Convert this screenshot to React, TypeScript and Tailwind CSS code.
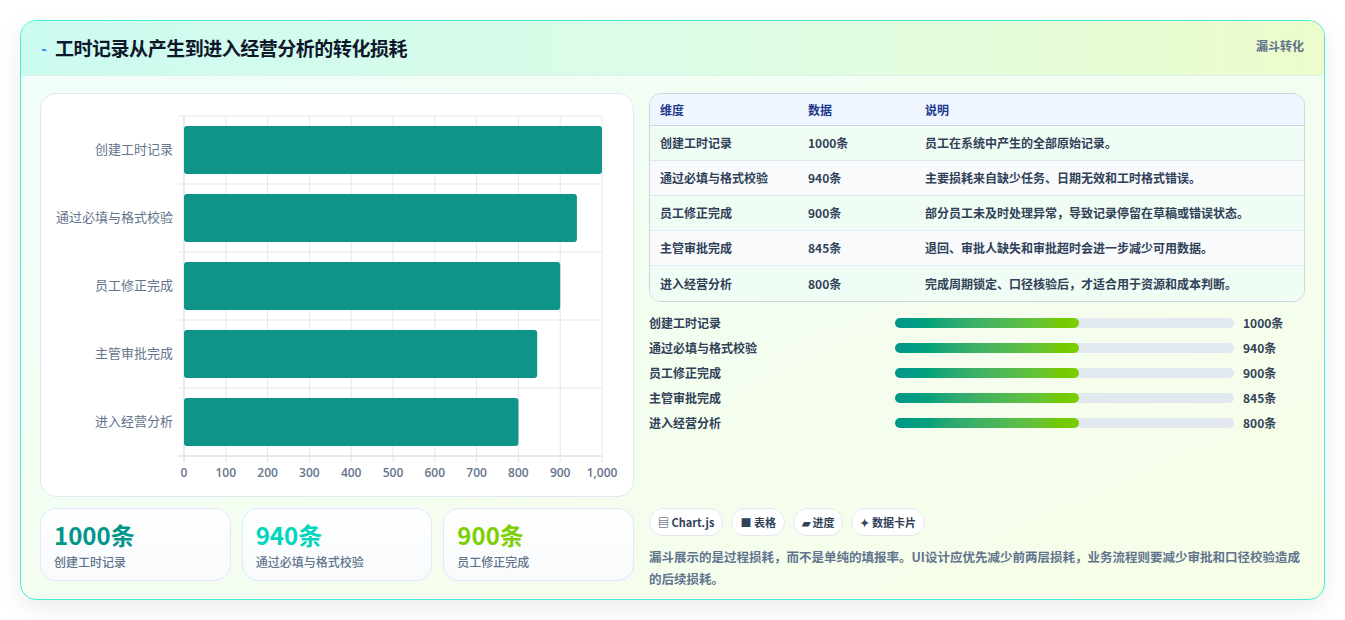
import React from "react";

const rows = [
  ["创建工时记录", 1000, "员工在系统中产生的全部原始记录。"],
  ["通过必填与格式校验", 940, "主要损耗来自缺少任务、日期无效和工时格式错误。"],
  ["员工修正完成", 900, "部分员工未及时处理异常，导致记录停留在草稿或错误状态。"],
  ["主管审批完成", 845, "退回、审批人缺失和审批超时会进一步减少可用数据。"],
  ["进入经营分析", 800, "完成周期锁定、口径核验后，才适合用于资源和成本判断。"],
] as const;

function Chart() {
  const x0 = 143, x1 = 561, top = 22, band = 68;
  const sx = (v: number) => x0 + ((x1 - x0) * v) / 1000;
  return (
    <svg width="593" height="403" className="block">
      {Array.from({ length: 11 }, (_, i) => (
        <g key={i}>
          <line x1={sx(i * 100)} x2={sx(i * 100)} y1={top} y2={top + band * 5 + 6} stroke={i === 0 ? "#d1d5db" : "#e5e7eb"} />
          <text x={sx(i * 100)} y={383} textAnchor="middle" fontSize="12" fontWeight="600" fill="#64748b" fontFamily="'Open Sans', sans-serif">
            {i === 10 ? "1,000" : i * 100}
          </text>
        </g>
      ))}
      {Array.from({ length: 6 }, (_, i) => (
        <line key={i} x1={x0 - 6} x2={x1} y1={top + band * i} y2={top + band * i} stroke={i === 5 ? "#d1d5db" : "#e5e7eb"} />
      ))}
      {rows.map(([n, v], i) => (
        <g key={n}>
          <rect x={x0} y={top + band * i + 10} width={sx(v) - x0} height={48} rx={3} fill="#0f9488" />
          <text x={132} y={top + band * i + 38} textAnchor="end" fontSize="13" fill="#64748b" fontFamily="'Noto Sans CJK SC', sans-serif">{n}</text>
        </g>
      ))}
    </svg>
  );
}

export default function App() {
  return (
    <div className="w-[1345px] h-[620px] bg-white pt-5 pl-5" style={{ fontFamily: "'Noto Sans CJK SC', 'Noto Sans', sans-serif" }}>
      <div className="w-[1305px] h-[580px] rounded-2xl border border-teal-300 overflow-hidden shadow-[0_8px_24px_rgba(0,0,0,0.08)] bg-gradient-to-br from-[#f0fdfa] to-[#f7fee7]">
        <div className="h-[55px] flex items-center justify-between px-5 bg-gradient-to-r from-[#ccfbf1] via-[#dcfce7] to-[#ecfccb] border-b border-[#d9f3ea]">
          <div className="flex items-center gap-2">
            <span className="text-blue-600 text-[10px]">⌁</span>
            <span className="text-[19px] font-bold text-slate-900 tracking-tight">工时记录从产生到进入经营分析的转化损耗</span>
          </div>
          <span className="text-[12px] font-bold text-slate-500 self-start mt-[16px]">漏斗转化</span>
        </div>
        <div className="flex gap-[15px] px-[19px] pt-[17px]">
          <div className="w-[594px] flex flex-col gap-[11px]">
            <div className="h-[404px] bg-white rounded-2xl border border-[#e2e8f0]">
              <Chart />
            </div>
            <div className="grid grid-cols-3 gap-[11px]">
              {[["1000条", "创建工时记录", "text-teal-600"], ["940条", "通过必填与格式校验", "text-teal-400"], ["900条", "员工修正完成", "text-lime-500"]].map(([v, l, c]) => (
                <div key={l} className="h-[73px] rounded-2xl border border-[#dbeafe] bg-gradient-to-b from-white to-[#f8fafc] px-[13px] pt-[10px]">
                  <div className={`text-[24px] font-bold leading-[32px] ${c}`}>{v}</div>
                  <div className="text-[12px] font-medium text-slate-500 mt-[2px]">{l}</div>
                </div>
              ))}
            </div>
          </div>
          <div className="w-[657px] flex flex-col">
            <div className="rounded-xl border border-[#cbd5e1] overflow-hidden text-[12px] font-semibold">
              <div className="flex items-center h-[32px] bg-[#eff6ff] text-blue-900 border-b border-[#cbd5e1]">
                <div className="w-[158px] pl-[10px]">维度</div><div className="w-[117px]">数据</div><div>说明</div>
              </div>
              {rows.map(([n, v, d], i) => (
                <div key={n} className={`flex items-center h-[35px] text-slate-700 ${i < 4 ? "border-b border-[#e2e8f0]" : ""} ${i % 2 ? "bg-[#f8fafc]" : "bg-[#f0fdf4]"}`}>
                  <div className="w-[158px] pl-[10px]">{n}</div><div className="w-[117px]">{v}条</div><div>{d}</div>
                </div>
              ))}
            </div>
            <div className="mt-[12px] flex flex-col gap-[7px]">
              {rows.map(([n, v]) => (
                <div key={n} className="flex items-center h-[18px] text-[12px] font-semibold text-slate-700">
                  <div className="w-[246px]">{n}</div>
                  <div className="w-[339px] h-[10px] rounded-full bg-[#e2e8f0]">
                    <div className="w-[184px] h-full rounded-full bg-gradient-to-r from-teal-600 to-lime-500" />
                  </div>
                  <div className="ml-[9px] font-bold">{v}条</div>
                </div>
              ))}
            </div>
            <div className="mt-[76px] flex gap-2">
              {["▤ Chart.js", "■ 表格", "▰ 进度", "✦ 数据卡片"].map((t) => (
                <span key={t} className="h-[28px] px-[8px] flex items-center rounded-full border border-[#e2e8f0] bg-white text-[11px] font-semibold text-slate-700">{t}</span>
              ))}
            </div>
            <p className="mt-[10px] text-[12.5px] leading-[22px] font-semibold text-slate-500">
              漏斗展示的是过程损耗，而不是单纯的填报率。UI设计应优先减少前两层损耗，业务流程则要减少审批和口径校验造成的后续损耗。
            </p>
          </div>
        </div>
      </div>
    </div>
  );
}
